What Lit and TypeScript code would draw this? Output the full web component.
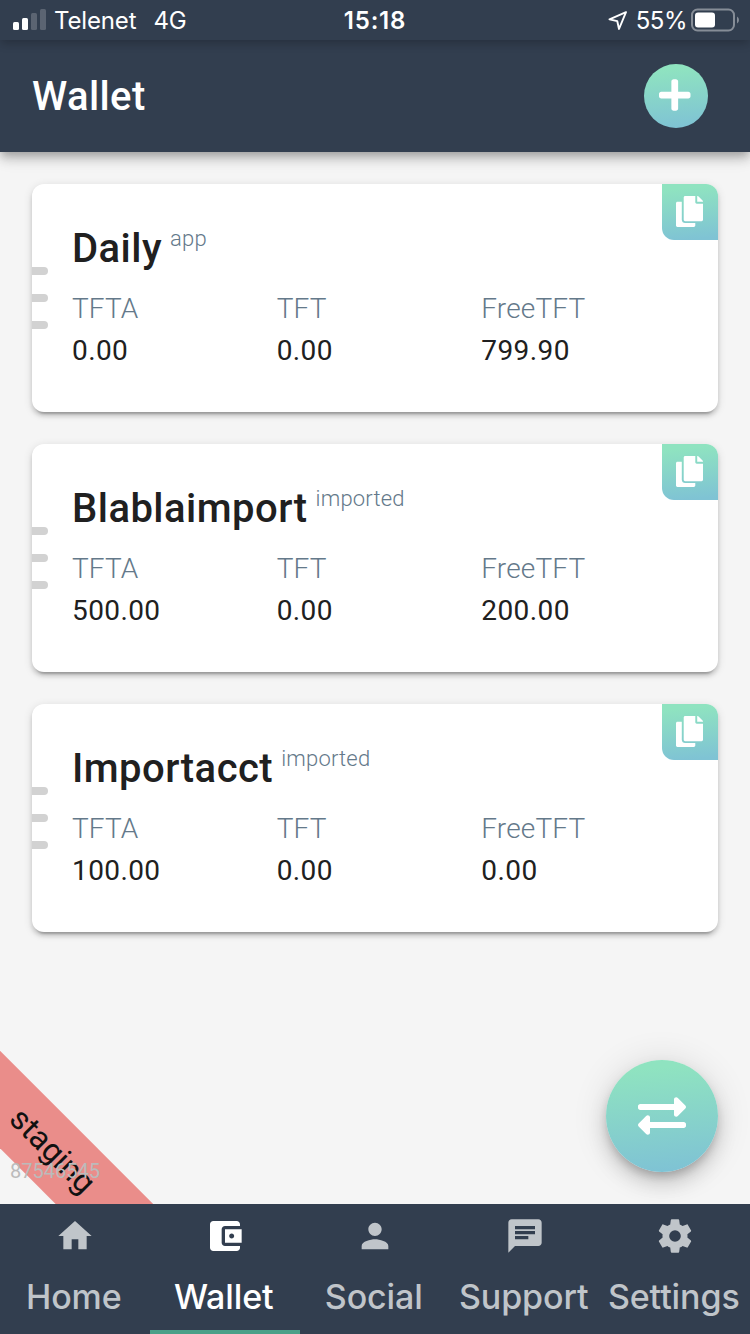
import { LitElement, html, css, svg } from 'lit';
import { customElement, property } from 'lit/decorators.js';
import { classMap } from 'lit/directives/class-map.js';

interface Balance {
  currency: string;
  amount: string;
}
interface Wallet {
  name: string;
  tag: string;
  balances: Balance[];
}

const wallets: Wallet[] = [
  ['Daily', 'app', '0.00', '0.00', '799.90'],
  ['Blablaimport', 'imported', '500.00', '0.00', '200.00'],
  ['Importacct', 'imported', '100.00', '0.00', '0.00'],
].map(([name, tag, tfta, tft, free]) => ({
  name,
  tag,
  balances: [
    { currency: 'TFTA', amount: tfta },
    { currency: 'TFT', amount: tft },
    { currency: 'FreeTFT', amount: free },
  ],
}));

const tabs = [
  { label: 'Home', icon: svg`<path d="M10 20v-6h4v6h5v-8h3L12 3 2 12h3v8z"/>` },
  {
    label: 'Wallet',
    icon: svg`<path d="M21 18v1c0 1.100-.9 2-2 2H5c-1.110 0-2-.9-2-2V5c0-1.100.89-2 2-2h14c1.100 0 2 .9 2 2v1h-9c-1.110 0-2 .9-2 2v8c0 1.100.89 2 2 2h9zm-9-2h10V8H12v8zm4-2.500c-.83 0-1.500-.67-1.500-1.500s.67-1.500 1.500-1.500 1.500.67 1.500 1.500-.67 1.500-1.500 1.500z"/>`,
  },
  {
    label: 'Social',
    icon: svg`<path d="M12 12c2.210 0 4-1.790 4-4s-1.790-4-4-4-4 1.790-4 4 1.790 4 4 4zm0 2c-2.670 0-8 1.340-8 4v2h16v-2c0-2.660-5.330-4-8-4z"/>`,
  },
  {
    label: 'Support',
    icon: svg`<path d="M20 2H4c-1.100 0-1.990.9-1.990 2L2 22l4-4h14c1.100 0 2-.9 2-2V4c0-1.100-.9-2-2-2zM6 9h12v2H6V9zm8 5H6v-2h8v2zm4-6H6V6h12v2z"/>`,
  },
  {
    label: 'Settings',
    icon: svg`<path d="M12 15.500A3.500 3.500 0 0 1 8.500 12 3.500 3.500 0 0 1 12 8.500a3.500 3.500 0 0 1 3.500 3.500 3.500 3.500 0 0 1-3.500 3.500m7.430-2.530c.04-.32.07-.64.07-.97s-.03-.66-.07-1l2.110-1.630c.19-.15.24-.42.12-.64l-2-3.460c-.12-.22-.39-.31-.61-.22l-2.490 1c-.52-.39-1.060-.73-1.690-.98l-.37-2.650A.506.506 0 0 0 14 2h-4c-.25 0-.46.18-.5.42l-.37 2.650c-.63.25-1.170.59-1.690.98l-2.490-1c-.22-.09-.49 0-.61.22l-2 3.460c-.13.22-.07.49.12.64L4.570 11c-.04.34-.07.67-.07 1s.03.65.07.97l-2.110 1.660c-.19.15-.25.42-.12.64l2 3.460c.12.22.39.3.61.22l2.490-1.010c.52.4 1.060.74 1.690.99l.37 2.650c.04.24.25.42.5.42h4c.25 0 .46-.18.5-.42l.37-2.650c.63-.26 1.170-.59 1.690-.99l2.490 1.010c.22.08.49 0 .61-.22l2-3.460c.12-.22.07-.49-.12-.64z"/>`,
  },
];

@customElement('wallet-card')
class WalletCard extends LitElement {
  @property({ attribute: false }) wallet!: Wallet;

  static styles = css`
    :host {
      display: block;
      position: relative;
      height: 228px;
      box-sizing: border-box;
      padding: 41px 32px 0 40px;
      border-radius: 12px;
      background: #fff;
      color: #202020;
      box-shadow: 0 6px 2px -4px rgba(0, 0, 0, 0.2), 0 4px 4px rgba(0, 0, 0, 0.14),
        0 2px 10px rgba(0, 0, 0, 0.12);
    }
    .copy {
      position: absolute;
      top: 0;
      right: 0;
      width: 56px;
      height: 56px;
      box-sizing: border-box;
      padding: 0 1px 1px 0;
      display: flex;
      align-items: center;
      justify-content: center;
      border-radius: 0 12px 0 12px;
      background: linear-gradient(175deg, #8fe3c0 10%, #7fc3d4 95%);
    }
    .copy svg {
      width: 27px;
      height: 31px;
      fill: #fff;
    }
    .grip {
      position: absolute;
      left: 0;
      top: 83px;
      display: grid;
      gap: 19px;
    }
    .bar {
      width: 16px;
      height: 8px;
      border-radius: 0 4px 4px 0;
      background: #d2d2d2;
    }
    .heading {
      display: flex;
      gap: 8px;
      line-height: 48px;
    }
    .name {
      font-size: 40px;
      font-weight: 500;
      letter-spacing: 0.47px;
    }
    .tag {
      font-size: 22px;
      font-weight: 300;
      line-height: 28px;
      letter-spacing: 0.2px;
      color: #64798a;
    }
    .balances {
      display: grid;
      grid-template-columns: repeat(3, 1fr);
      margin-top: 15px;
      font-size: 28px;
      line-height: 42px;
      letter-spacing: 0.4px;
    }
    .currency {
      font-weight: 300;
      letter-spacing: 0.15px;
      color: #64798a;
    }
  `;

  render() {
    const { name, tag, balances } = this.wallet;
    return html`
      <div class="grip"><div class="bar"></div><div class="bar"></div><div class="bar"></div></div>
      <div class="heading"><span class="name">${name}</span><span class="tag">${tag}</span></div>
      <div class="balances">
        ${balances.map(
          (b) => html`<div><div class="currency">${b.currency}</div><div>${b.amount}</div></div>`,
        )}
      </div>
      <div class="copy">
        <svg viewBox="0 0 448 512"><path d="M320 448v40c0 13.255-10.745 24-24 24H24c-13.255 0-24-10.745-24-24V120c0-13.255 10.745-24 24-24h72v296c0 30.879 25.121 56 56 56h168zm0-344V0H152c-13.255 0-24 10.745-24 24v368c0 13.255 10.745 24 24 24h272c13.255 0 24-10.745 24-24V128H344c-13.200 0-24-10.800-24-24zm120.971-31.029L375.029 7.029A24 24 0 0 0 358.059 0H352v96h96v-6.059a24 24 0 0 0-7.029-16.970z"/></svg>
      </div>
    `;
  }
}

@customElement('app-root')
class AppRoot extends LitElement {
  static styles = css`
    :host {
      display: flex;
      flex-direction: column;
      width: 750px;
      height: 1334px;
      overflow: hidden;
      background: #f5f5f5;
      font-family: Roboto, sans-serif;
    }
    .status {
      position: relative;
      z-index: 3;
      flex: none;
      box-sizing: border-box;
      height: 40px;
      padding: 0 10px 0 13px;
      display: grid;
      grid-template-columns: 1fr auto 1fr;
      align-items: center;
      background: #323e4f;
      color: #fff;
      font-family: Inter, sans-serif;
      font-size: 24px;
      line-height: 38px;
      box-shadow: 0 4px 8px -2px rgba(0, 0, 0, 0.14), 0 4px 10px rgba(0, 0, 0, 0.1);
    }
    .carrier,
    .power {
      display: flex;
      align-items: center;
    }
    .carrier span,
    .power span,
    .time {
      padding-top: 2px;
    }
    .carrier {
      letter-spacing: -0.15px;
    }
    .power {
      justify-content: flex-end;
    }
    .power span {
      letter-spacing: -0.5px;
    }
    .signal {
      width: 33px;
      height: 22px;
      margin-right: 8px;
    }
    .network {
      margin-left: 17px;
    }
    .time {
      font-weight: 600;
      letter-spacing: 0.8px;
      margin-right: 3px;
    }
    .location {
      width: 20px;
      height: 20px;
      margin-right: 8px;
    }
    .battery {
      width: 49px;
      height: 24px;
      margin-left: 4px;
    }
    .header {
      position: relative;
      z-index: 2;
      flex: none;
      height: 112px;
      box-sizing: border-box;
      padding: 0 42px 0 32px;
      display: flex;
      align-items: center;
      justify-content: space-between;
      background: #323e4f;
      color: #fff;
      font-size: 40px;
      font-weight: 500;
      letter-spacing: 0.4px;
      box-shadow: 0 4px 8px -2px rgba(0, 0, 0, 0.2), 0 8px 10px rgba(0, 0, 0, 0.14),
        0 2px 20px rgba(0, 0, 0, 0.12);
    }
    .add {
      width: 64px;
      height: 64px;
      border-radius: 50%;
      display: flex;
      align-items: center;
      justify-content: center;
      background: linear-gradient(175deg, #8fe3c0 10%, #7fc3d4 95%);
    }
    .add svg {
      width: 31.5px;
      height: 36px;
      margin: -3px 2px 0 0;
      fill: #fff;
    }
    .main {
      position: relative;
      flex: 1;
      min-height: 0;
      overflow: hidden;
      padding: 32px;
      display: flex;
      flex-direction: column;
      gap: 32px;
    }
    .swap {
      position: absolute;
      right: 32px;
      bottom: 32px;
      width: 112px;
      height: 112px;
      border-radius: 50%;
      display: flex;
      align-items: center;
      justify-content: center;
      background: linear-gradient(175deg, #8fe3c0 10%, #7fc3d4 95%);
      box-shadow: 0 6px 10px -2px rgba(0, 0, 0, 0.2), 0 12px 20px rgba(0, 0, 0, 0.14),
        0 2px 36px rgba(0, 0, 0, 0.12);
    }
    .swap svg {
      width: 48px;
      height: 48px;
      fill: #fff;
    }
    .ribbon {
      position: absolute;
      left: -148px;
      bottom: 18px;
      width: 400px;
      height: 68.6px;
      transform: rotate(45deg);
      background: #ea8d8a;
      color: #111;
      font-size: 32px;
      line-height: 67px;
      text-align: center;
    }
    .version {
      position: absolute;
      left: 10px;
      bottom: 21px;
      color: #bbb;
      font-size: 20px;
      line-height: 24px;
    }
    .tabs {
      position: relative;
      flex: none;
      height: 130px;
      display: grid;
      grid-template-columns: repeat(5, 150px);
      background: #323e4f;
      color: #c0c5ca;
      font-family: Inter, sans-serif;
      font-size: 34px;
      font-weight: 500;
    }
    .tab {
      box-sizing: border-box;
      padding-top: 12px;
      display: flex;
      flex-direction: column;
      align-items: center;
      gap: 21px;
      line-height: 40px;
      border-bottom: 4px solid transparent;
      white-space: nowrap;
    }
    .tab span {
      letter-spacing: -0.1px;
      margin-right: 2.5px;
    }
    .tab.active {
      color: #fff;
      border-color: #4ba088;
    }
    .tab svg {
      width: 40px;
      height: 40px;
      flex: none;
      fill: currentColor;
    }
  `;

  render() {
    return html`
      <div class="status">
        <div class="carrier">
          <svg class="signal" viewBox="0 0 33 22" fill="#fff">
            <rect x="0" y="13" width="6" height="8" rx="1.500" />
            <rect x="9" y="9" width="6" height="12" rx="1.500" />
            <rect x="18" y="4" width="6" height="17" rx="1.500" opacity=".2" />
            <rect x="27" y="0" width="6" height="21" rx="1.500" opacity=".2" />
          </svg>
          <span>Telenet</span><span class="network">4G</span>
        </div>
        <div class="time">15:18</div>
        <div class="power">
          <svg class="location" viewBox="0 0 20 20" fill="none" stroke="#fff" stroke-width="1.900" stroke-linejoin="round">
            <path d="M18 2.200L1.500 9.300L9.300 11.200L11 19Z" />
          </svg>
          <span>55%</span>
          <svg class="battery" viewBox="0 0 49 24">
            <rect x="1" y="1.500" width="42" height="21" rx="5.500" fill="none" stroke="#868d97" stroke-width="2" />
            <rect x="4" y="4.500" width="20" height="15" rx="3" fill="#fff" />
            <path d="M46 8.500Q48 9.500 48 12T46 15.500z" fill="#868d97" />
          </svg>
        </div>
      </div>
      <div class="header">
        <span>Wallet</span>
        <div class="add">
          <svg viewBox="0 0 448 512"><path d="M416 208H272V64c0-17.670-14.330-32-32-32h-32c-17.670 0-32 14.330-32 32v144H32c-17.670 0-32 14.330-32 32v32c0 17.670 14.330 32 32 32h144v144c0 17.670 14.330 32 32 32h32c17.670 0 32-14.330 32-32V304h144c17.670 0 32-14.330 32-32v-32c0-17.670-14.330-32-32-32z"/></svg>
        </div>
      </div>
      <div class="main">
        ${wallets.map((w) => html`<wallet-card .wallet=${w}></wallet-card>`)}
        <div class="ribbon">staging</div>
        <div class="version">87546545</div>
        <div class="swap">
          <svg viewBox="0 0 512 512"><path d="M0 168v-16c0-13.255 10.745-24 24-24h360V80c0-21.367 25.899-32.042 40.971-16.971l80 80c9.372 9.373 9.372 24.569 0 33.941l-80 80C409.956 271.982 384 261.456 384 240v-48H24c-13.255 0-24-10.745-24-24zm488 152H128v-48c0-21.314-25.862-32.080-40.971-16.971l-80 80c-9.372 9.373-9.372 24.569 0 33.941l80 80C102.057 463.997 128 453.437 128 432v-48h360c13.255 0 24-10.745 24-24v-16c0-13.255-10.745-24-24-24z"/></svg>
        </div>
      </div>
      <div class="tabs">
        ${tabs.map(
          (t) => html`<div class=${classMap({ tab: true, active: t.label === 'Wallet' })}>
            <svg viewBox="0 0 24 24">${t.icon}</svg><span>${t.label}</span>
          </div>`,
        )}
      </div>
    `;
  }
}
